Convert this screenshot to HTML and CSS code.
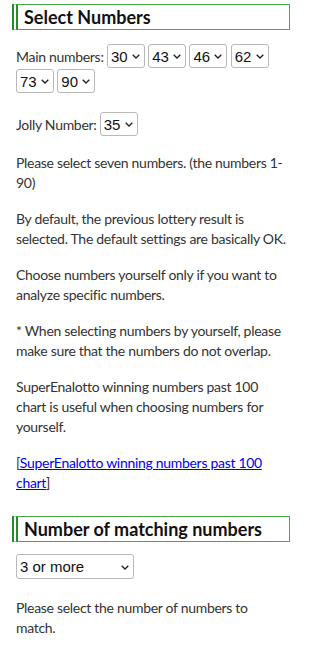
FILE: index.html
```html
<!DOCTYPE html>
<html lang="en">
<head>
<meta charset="utf-8">
<title>SuperEnalotto</title>
<link rel="stylesheet" href="styles.css">
</head>
<body>
<div class="wrap">
  <h2 class="sec-title">Select Numbers</h2>
  <p class="pick">Main numbers:
    <span class="sel"><select class="num"><option>30</option></select><svg class="chev" viewBox="0 0 8 5"><polyline points="0.7,0.7 4,4 7.3,0.7"/></svg></span>
    <span class="sel"><select class="num"><option>43</option></select><svg class="chev" viewBox="0 0 8 5"><polyline points="0.7,0.7 4,4 7.3,0.7"/></svg></span>
    <span class="sel"><select class="num"><option>46</option></select><svg class="chev" viewBox="0 0 8 5"><polyline points="0.7,0.7 4,4 7.3,0.7"/></svg></span>
    <span class="sel"><select class="num"><option>62</option></select><svg class="chev" viewBox="0 0 8 5"><polyline points="0.7,0.7 4,4 7.3,0.7"/></svg></span>
    <span class="sel"><select class="num"><option>73</option></select><svg class="chev" viewBox="0 0 8 5"><polyline points="0.7,0.7 4,4 7.3,0.7"/></svg></span>
    <span class="sel"><select class="num"><option>90</option></select><svg class="chev" viewBox="0 0 8 5"><polyline points="0.7,0.7 4,4 7.3,0.7"/></svg></span>
  </p>
  <p class="pick jolly">Jolly Number: <span class="sel"><select class="num"><option>35</option></select><svg class="chev" viewBox="0 0 8 5"><polyline points="0.7,0.7 4,4 7.3,0.7"/></svg></span></p>
  <p>Please select seven numbers. (the numbers 1-90)</p>
  <p>By default, the previous lottery result is selected. The default settings are basically OK.</p>
  <p>Choose numbers yourself only if you want to analyze specific numbers.</p>
  <p>* When selecting numbers by yourself, please make sure that the numbers do not overlap.</p>
  <p>SuperEnalotto winning numbers past 100 chart is useful when choosing numbers for yourself.</p>
  <p>[<a href="#">SuperEnalotto winning numbers past 100 chart</a>]</p>
  <h2 class="sec-title">Number of matching numbers</h2>
  <p class="pick match-row"><span class="sel"><select class="match"><option>3 or more</option></select><svg class="chev" viewBox="0 0 8 5"><polyline points="0.7,0.7 4,4 7.3,0.7"/></svg></span></p>
  <p class="after-match">Please select the number of numbers to match.</p>
</div>
</body>
</html>
```
FILE: styles.css
```css
html, body {
  margin: 0;
  padding: 0;
  background: #fff;
}
.wrap {
  width: 278px;
  padding: 4px 0 0 12px;
  font-family: Lato, "Noto Sans", sans-serif;
  font-size: 14px;
  line-height: 20px;
  letter-spacing: -0.3px;
  color: #333;
}
.sec-title {
  margin: 23px 0 12px;
  padding: 0 4px 0 6px;
  font-size: 18px;
  line-height: 24px;
  font-weight: 700;
  letter-spacing: 0;
  color: #111;
  border: 1px solid #46a846;
  border-left: 6px double #2a8a2a;
}
.wrap > .sec-title:first-child {
  margin-top: 0;
}
p {
  margin: 16px 0;
  padding-left: 4px;
}
.pick {
  margin-top: 14px;
  line-height: 25px;
}
.pick.jolly {
  margin-top: 18px;
}
.pick.match-row {
  margin-top: 12px;
}
.after-match {
  margin-top: 19px;
}
.sel {
  position: relative;
  display: inline-block;
  vertical-align: top;
  line-height: 0;
}
.num, .match {
  -webkit-appearance: none;
  appearance: none;
  margin: 0;
  font-family: "Liberation Sans", Arial, sans-serif;
  font-size: 15px;
  letter-spacing: 0;
  color: #111;
  height: 24px;
  padding: 0 16px 0 3px;
  border: 1px solid #b8b8b8;
  border-radius: 3px;
  background-color: #fff;
}
.match {
  width: 118px;
  height: 25px;
}
.chev {
  position: absolute;
  right: 5px;
  top: 50%;
  width: 8px;
  height: 5px;
  margin-top: -2px;
  fill: none;
  stroke: #222;
  stroke-width: 1.3;
  pointer-events: none;
}
a {
  color: #0000ee;
}
```
